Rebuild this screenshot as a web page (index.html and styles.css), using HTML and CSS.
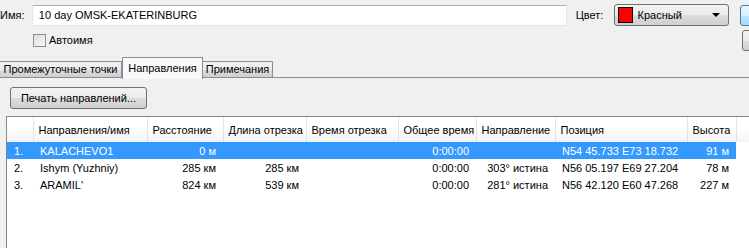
FILE: index.html
```html
<!DOCTYPE html>
<html lang="ru">
<head>
    <meta charset="UTF-8">
    <title>Маршрут</title>
    <link rel="stylesheet" href="styles.css">
</head>
<body>
    <div class="dialog">

        <!-- Name / colour row -->
        <div class="top-row">
            <label class="lbl name-lbl">Имя:</label>
            <input class="name-input" type="text" value="10 day OMSK-EKATERINBURG">
            <label class="lbl color-lbl">Цвет:</label>
            <div class="color-select">
                <span class="swatch"></span>
                <span class="color-text">Красный</span>
                <span class="arrow"></span>
            </div>
            <div class="side-btn side-btn-default"></div>
        </div>

        <div class="second-row">
            <label class="auto-name"><span class="check"></span>Автоимя</label>
            <div class="side-btn"></div>
        </div>

        <!-- Tabs -->
        <div class="tabs">
            <div class="tab tab-points">Промежуточные точки</div>
            <div class="tab tab-dirs active">Направления</div>
            <div class="tab tab-notes">Примечания</div>
            <div class="tab-fill"></div>
        </div>

        <div class="panel">
            <button class="print-btn">Печать направлений...</button>

            <div class="list">
                <table class="grid">
                    <colgroup>
                        <col style="width:26px">
                        <col style="width:114px">
                        <col style="width:76px">
                        <col style="width:83px">
                        <col style="width:92px">
                        <col style="width:78px">
                        <col style="width:79px">
                        <col style="width:132px">
                        <col style="width:49px">
                        <col>
                    </colgroup>
                    <thead>
                        <tr>
                            <th></th>
                            <th>Направления/имя</th>
                            <th>Расстояние</th>
                            <th>Длина отрезка</th>
                            <th>Время отрезка</th>
                            <th>Общее время</th>
                            <th>Направление</th>
                            <th>Позиция</th>
                            <th>Высота</th>
                            <th class="filler"></th>
                        </tr>
                    </thead>
                    <tbody>
                        <tr class="selected">
                            <td>1.</td>
                            <td>KALACHEVO1</td>
                            <td class="num">0 м</td>
                            <td class="num"></td>
                            <td class="num"></td>
                            <td class="num">0:00:00</td>
                            <td class="num"></td>
                            <td>N54 45.733 E73 18.732</td>
                            <td class="num">91 м</td>
                            <td class="blank"></td>
                        </tr>
                        <tr>
                            <td>2.</td>
                            <td>Ishym (Yuzhniy)</td>
                            <td class="num">285 км</td>
                            <td class="num">285 км</td>
                            <td class="num"></td>
                            <td class="num">0:00:00</td>
                            <td class="num">303° истина</td>
                            <td>N56 05.197 E69 27.204</td>
                            <td class="num">78 м</td>
                            <td class="blank"></td>
                        </tr>
                        <tr>
                            <td>3.</td>
                            <td>ARAMIL'</td>
                            <td class="num">824 км</td>
                            <td class="num">539 км</td>
                            <td class="num"></td>
                            <td class="num">0:00:00</td>
                            <td class="num">281° истина</td>
                            <td>N56 42.120 E60 47.268</td>
                            <td class="num">227 м</td>
                            <td class="blank"></td>
                        </tr>
                    </tbody>
                </table>
            </div>
        </div>
    </div>
</body>
</html>
```

FILE: styles.css
```css
html, body {
    margin: 0;
    padding: 0;
    height: 100%;
    overflow: hidden;
}

body {
    font-family: "Liberation Sans", Arial, sans-serif;
    font-size: 11px;
    background-color: #f0f0f0;
    color: #000000;
}

.dialog {
    width: 760px;
}

/* top row */

.top-row {
    display: flex;
    align-items: center;
    height: 22px;
    padding-top: 4px;
}

.name-lbl {
    width: 32px;
}

.name-input {
    box-sizing: border-box;
    width: 537px;
    height: 21px;
    margin: 0;
    padding: 0 6px;
    border: 1px solid #e2e3ea;
    border-top-color: #abadb3;
    background: #ffffff;
    font-family: inherit;
    font-size: 11px;
    color: #000;
    outline: none;
}

.color-lbl {
    margin-left: 9px;
    width: 38px;
}

.color-select {
    box-sizing: border-box;
    display: flex;
    align-items: center;
    width: 116px;
    height: 22px;
    padding: 0 3px;
    border: 1px solid #707070;
    border-radius: 3px;
    background: linear-gradient(#f2f2f2, #ebebeb 50%, #dddddd 51%, #cfcfcf);
}

.swatch {
    box-sizing: border-box;
    width: 15px;
    height: 16px;
    background: #ff0000;
    border: 1px solid #000;
}

.color-text {
    margin-left: 5px;
    flex: 1;
}

.arrow {
    width: 0;
    height: 0;
    border-left: 4px solid transparent;
    border-right: 4px solid transparent;
    border-top: 4px solid #000;
    margin-right: 5px;
}

.side-btn {
    box-sizing: border-box;
    width: 20px;
    height: 21px;
    margin-left: 11px;
    border: 1px solid #707070;
    border-radius: 3px;
    background: linear-gradient(#f2f2f2, #ebebeb 50%, #dddddd 51%, #cfcfcf);
}

.side-btn-default {
    border-color: #3c7fb1;
    background: linear-gradient(#eaf6fd, #d9f0fc 50%, #bee6fd 51%, #a7d9f5);
}

.second-row {
    display: flex;
    align-items: center;
    justify-content: space-between;
    width: 762px;
    height: 20px;
    margin-top: 4px;
}

.auto-name {
    display: flex;
    align-items: center;
    margin-left: 33px;
}

.check {
    box-sizing: border-box;
    width: 13px;
    height: 13px;
    margin-right: 3px;
    border: 1px solid #8f8f8f;
    background: linear-gradient(135deg, #dcdcdc, #f8f8f8);
}

/* tabs */

.tabs {
    display: flex;
    align-items: flex-end;
    height: 21px;
    margin-top: 7px;
}

.tab {
    box-sizing: border-box;
    height: 17px;
    line-height: 15px;
    text-align: center;
    border: 1px solid #898c95;
    background: linear-gradient(#f2f2f2, #ebebeb 50%, #dddddd 51%, #cfcfcf);
    white-space: nowrap;
}

.tab-points {
    width: 122px;
    border-left: none;
}

.tab-dirs {
    width: 81px;
}

.tab-notes {
    width: 70px;
    border-left: none;
}

.tab.active {
    height: 22px;
    margin-bottom: -1px;
    padding-top: 2px;
    line-height: 17px;
    border-bottom: none;
    background: #f9f9f9;
    position: relative;
}

.tab-fill {
    flex: 1;
    border-bottom: 1px solid #898c95;
}

/* panel */

.panel {
    padding: 9px 0 0 6px;
}

.print-btn {
    box-sizing: border-box;
    display: block;
    width: 137px;
    height: 22px;
    margin-left: 4px;
    padding: 0;
    border: 1px solid #707070;
    border-radius: 3px;
    background: linear-gradient(#f2f2f2, #ebebeb 50%, #dddddd 51%, #cfcfcf);
    font-family: inherit;
    font-size: 11px;
    color: #000;
}

.list {
    height: 132px;
    margin-top: 7px;
    border: 1px solid #828790;
    border-right: none;
    background: #ffffff;
}

.grid {
    border-collapse: collapse;
    table-layout: fixed;
    width: 760px;
}

.grid th {
    height: 25px;
    padding: 0 5px;
    text-align: left;
    font-weight: normal;
    white-space: nowrap;
    overflow: hidden;
    border-right: 1px solid #e3e3e3;
    background: linear-gradient(#ffffff, #ffffff 40%, #f3f4f6);
}

.grid th.filler {
    border-right: none;
}

.grid td {
    height: 17px;
    padding: 1px 7px 0 7px;
    box-sizing: border-box;
    white-space: nowrap;
    overflow: hidden;
}

.grid td.num {
    text-align: right;
}

.grid tr.selected td {
    background: #3399ff;
    color: #ffffff;
}

.grid tr.selected td.blank {
    background: #ffffff;
}
```
